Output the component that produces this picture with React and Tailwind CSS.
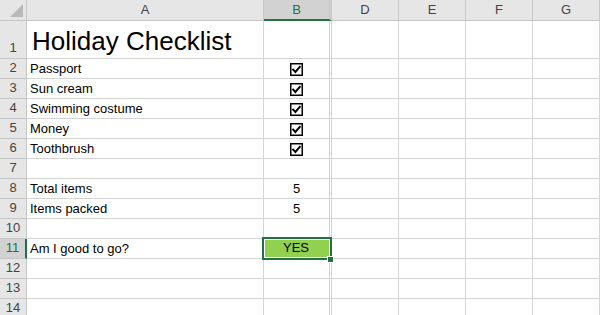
import React from 'react';

const FONT = { fontFamily: '"Liberation Sans", Arial, sans-serif' };

const cols = [
    { key: 'A', w: 'w-[237px]' },
    { key: 'B', w: 'w-[68px]' },
    { key: 'D', w: 'w-[67px]' },
    { key: 'E', w: 'w-[67px]' },
    { key: 'F', w: 'w-[67px]' },
    { key: 'G', w: 'w-[67px]' },
];

const rows = [
    { n: 1, a: 'Holiday Checklist', title: true },
    { n: 2, a: 'Passport', check: true },
    { n: 3, a: 'Sun cream', check: true },
    { n: 4, a: 'Swimming costume', check: true },
    { n: 5, a: 'Money', check: true },
    { n: 6, a: 'Toothbrush', check: true },
    { n: 7 },
    { n: 8, a: 'Total items', b: '5' },
    { n: 9, a: 'Items packed', b: '5' },
    { n: 10 },
    { n: 11, a: 'Am I good to go?', yes: true },
    { n: 12 },
    { n: 13 },
    { n: 14 },
];

function CheckBox() {
    return (
        <svg width="13" height="13" viewBox="0 0 13 13">
            <rect x="0.75" y="0.75" width="11.5" height="11.5" fill="white" stroke="#000" strokeWidth="1.5" />
            <path d="M3.2 6.6 L5.4 8.9 L9.8 3.8" fill="none" stroke="#000" strokeWidth="2" strokeLinecap="square" />
        </svg>
    );
}

function CornerCell() {
    return (
        <div className="w-[27px] h-full bg-[#e6e6e6] border-r border-b border-[#c6c6c6] relative">
            <svg className="absolute right-[3px] bottom-[3px]" width="13" height="13" viewBox="0 0 13 13">
                <polygon points="13,0 13,13 0,13" fill="#b9b9b9" />
            </svg>
        </div>
    );
}

export default function App() {
    return (
        <div className="w-[600px] h-[315px] overflow-hidden bg-white text-[13px] text-black" style={FONT}>
            {/* column headers */}
            <div className="flex h-[21px]">
                <CornerCell />
                {cols.map(c => (
                    <div
                        key={c.key}
                        className={`${c.w} h-full flex items-center justify-center border-b ${
                            c.key === 'B'
                                ? 'bg-[#d2d2d2] text-[#217346] border-b-2 border-b-[#217346] border-r-[3px] border-double border-r-[#c6c6c6]'
                                : 'bg-[#e6e6e6] text-[#444] border-r border-[#c6c6c6]'
                        }`}
                    >
                        {c.key}
                    </div>
                ))}
            </div>

            {/* rows */}
            {rows.map(r => (
                <div key={r.n} className={`flex ${r.n === 1 ? 'h-[38px]' : 'h-[20px]'}`}>
                    <div
                        className={`w-[27px] h-full flex items-end justify-center pb-[1px] border-b border-[#c6c6c6] ${
                            r.yes
                                ? 'bg-[#d2d2d2] text-[#217346] border-r-2 border-r-[#217346]'
                                : 'bg-[#e6e6e6] text-[#444] border-r'
                        }`}
                    >
                        {r.n}
                    </div>
                    <div className={`w-[237px] h-full flex items-end border-r border-b border-[#d4d4d4] ${r.title ? 'pl-[5px] pb-[2px]' : 'pl-[3px]'}`}>
                        {r.title ? <span className="text-[26px] leading-[30px]">{r.a}</span> : r.a}
                    </div>
                    <div className="w-[68px] h-full relative flex items-end justify-center border-b border-r-[3px] border-double border-[#d4d4d4]">
                        {r.check && (
                            <div className="h-full flex items-center pt-[1px]">
                                <CheckBox />
                            </div>
                        )}
                        {r.b}
                        {r.yes && (
                            <>
                                <div className="absolute z-10 left-[-2px] top-[-2px] w-[70px] h-[23px] border-2 border-[#217346] bg-[#92d050] shadow-[inset_0_0_0_1px_#ffffff] flex items-end justify-center pb-[1px]">
                                    <span className="pr-[2px]">YES</span>
                                </div>
                                <div className="absolute z-20 right-[-5px] bottom-[-5px] w-[7px] h-[7px] bg-[#217346] border border-white" />
                            </>
                        )}
                    </div>
                    {cols.slice(2).map(c => (
                        <div key={c.key} className={`${c.w} h-full border-r border-b border-[#d4d4d4]`} />
                    ))}
                </div>
            ))}
        </div>
    );
}
